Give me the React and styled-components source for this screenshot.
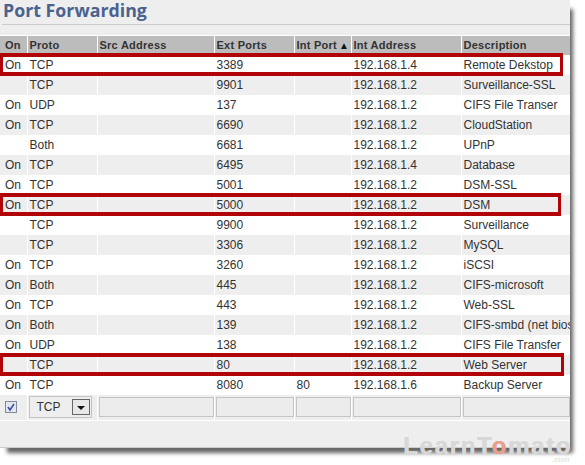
import React from "react";
import styled, { createGlobalStyle } from "styled-components";

const Global = createGlobalStyle`
  html, body {
    margin: 0;
    height: 465px;
    background: #fff;
    overflow: hidden;
  }
  body {
    font-family: "Liberation Sans", Arial, sans-serif;
    color: #333;
  }
`;

const Panel = styled.div`
  position: relative;
  width: 570px;
  height: 448px;
  box-sizing: border-box;
  background: #eee;
  border-bottom: 1px solid #ccc;
  box-shadow: 5px 7px 4px -2px #666;
`;

const Title = styled.h1`
  margin: 0 0 0 2px;
  height: 24px;
  padding-left: 1px;
  font-size: 17.8px;
  line-height: 20px;
  font-weight: bold;
  font-family: "Open Sans", sans-serif;
  color: #4b628f;
  border-bottom: 1px solid #ccc;
`;

const TableWrap = styled.div`
  position: relative;
  margin-top: 10px;
`;

const Table = styled.table`
  width: 570px;
  table-layout: fixed;
  border-collapse: collapse;
  font-size: 12px;
`;

const Head = styled.th`
  height: 19px;
  padding: 0 0 0 2px;
  box-sizing: border-box;
  background: #bcbcbc;
  border-left: 1px solid #fff;
  border-top: 1px solid #fff;
  text-align: left;
  font-weight: bold;
  font-size: 11px;
  letter-spacing: 0.25px;
  color: #333;
  white-space: nowrap;
  overflow: hidden;
  &:first-child {
    padding-left: 5px;
    border-left: 0;
  }
`;

const SortMark = styled.span`
  margin-left: 2px;
  font-size: 10px;
  letter-spacing: 0;
  color: #111;
`;

const Row = styled.tr`
  background: ${(p) => (p.$odd ? "#fff" : "#eee")};
`;

const Cell = styled.td`
  height: 20px;
  padding: 0 0 0 2px;
  box-sizing: border-box;
  border-left: 1px solid #fff;
  white-space: nowrap;
  overflow: hidden;
  color: #333;
  &:first-child {
    padding-left: 5px;
    border-left: 0;
  }
`;

const EditCell = styled.td`
  height: 26px;
  padding: 0 0 1px 1px;
  box-sizing: border-box;
  background: #eee;
  border-left: 1px solid #fff;
  border-bottom: 1px solid #fff;
  &:first-child {
    padding-left: 5px;
    border-left: 0;
  }
`;

const Check = styled.span`
  display: flex;
  width: 12px;
  height: 12px;
  box-sizing: border-box;
  border: 1px solid #7f8aa0;
  background: #e4e6ee;
  align-items: center;
  justify-content: center;
`;

const Select = styled.div`
  display: flex;
  align-items: center;
  justify-content: space-between;
  height: 22px;
  width: 63px;
  box-sizing: border-box;
  padding: 0 1px 0 7px;
  border: 1px solid #c4c4c4;
  font-size: 12px;
  color: #333;
`;

const SelectButton = styled.span`
  display: flex;
  align-items: center;
  justify-content: center;
  width: 18px;
  height: 16px;
  box-sizing: border-box;
  border: 1px solid #666;
  background: #e8e8e8;
`;

const Arrow = styled.span`
  width: 0;
  height: 0;
  margin-top: 2px;
  border-left: 4px solid transparent;
  border-right: 4px solid transparent;
  border-top: 4px solid #111;
`;

const Field = styled.div`
  height: 20px;
  box-sizing: border-box;
  border: 1px solid #c4c4c4;
  background: #ececec;
`;

const Mark = styled.div`
  position: absolute;
  left: 0;
  width: ${(p) => p.$w}px;
  top: ${(p) => p.$top}px;
  height: 23px;
  box-sizing: border-box;
  border: solid #b00408;
  border-width: 4px 3px;
`;

const Watermark = styled.div`
  position: absolute;
  left: 403px;
  top: 436px;
  font-size: 24px;
  line-height: 20px;
  font-weight: bold;
  letter-spacing: 1.7px;
  color: #d8d8d8;
  text-shadow: 0.6px 0 0 #d8d8d8;
  white-space: nowrap;
`;

const Tomato = styled.span`
  color: #e8a08e;
  text-shadow: 0.6px 0 0 #e8a08e;
`;

const Com = styled.div`
  position: absolute;
  left: 552px;
  top: 456px;
  font-size: 8px;
  line-height: 8px;
  font-style: italic;
  color: #d8d8d8;
`;

const columns = [
  ["On", 27],
  ["Proto", 70],
  ["Src Address", 117],
  ["Ext Ports", 80],
  ["Int Port", 57],
  ["Int Address", 110],
  ["Description", 109],
];

const rows = [
  ["On", "TCP", "3389", "", "192.168.1.4", "Remote Dekstop"],
  ["", "TCP", "9901", "", "192.168.1.2", "Surveillance-SSL"],
  ["On", "UDP", "137", "", "192.168.1.2", "CIFS File Transer"],
  ["On", "TCP", "6690", "", "192.168.1.2", "CloudStation"],
  ["", "Both", "6681", "", "192.168.1.2", "UPnP"],
  ["On", "TCP", "6495", "", "192.168.1.4", "Database"],
  ["On", "TCP", "5001", "", "192.168.1.2", "DSM-SSL"],
  ["On", "TCP", "5000", "", "192.168.1.2", "DSM"],
  ["", "TCP", "9900", "", "192.168.1.2", "Surveillance"],
  ["", "TCP", "3306", "", "192.168.1.2", "MySQL"],
  ["On", "TCP", "3260", "", "192.168.1.2", "iSCSI"],
  ["On", "Both", "445", "", "192.168.1.2", "CIFS-microsoft"],
  ["On", "TCP", "443", "", "192.168.1.2", "Web-SSL"],
  ["On", "Both", "139", "", "192.168.1.2", "CIFS-smbd (net bios)"],
  ["On", "UDP", "138", "", "192.168.1.2", "CIFS File Transfer"],
  ["", "TCP", "80", "", "192.168.1.2", "Web Server"],
  ["On", "TCP", "8080", "80", "192.168.1.6", "Backup Server"],
];

export default function App() {
  return (
    <>
      <Global />
      <Panel>
        <Title>Port Forwarding</Title>
        <TableWrap>
          <Table>
            <colgroup>
              {columns.map(([name, w]) => (
                <col key={name} width={w} />
              ))}
            </colgroup>
            <thead>
              <tr>
                {columns.map(([name]) => (
                  <Head key={name}>
                    {name}
                    {name === "Int Port" && <SortMark>▲</SortMark>}
                  </Head>
                ))}
              </tr>
            </thead>
            <tbody>
              {rows.map((r, i) => (
                <Row key={i} $odd={i % 2 === 0}>
                  <Cell>{r[0]}</Cell>
                  <Cell>{r[1]}</Cell>
                  <Cell />
                  <Cell>{r[2]}</Cell>
                  <Cell>{r[3]}</Cell>
                  <Cell>{r[4]}</Cell>
                  <Cell>{r[5]}</Cell>
                </Row>
              ))}
              <tr>
                <EditCell>
                  <Check>
                    <svg width="10" height="10" viewBox="0 0 10 10">
                      <path d="M2 5l2 3 4-6" fill="none" stroke="#3a4fb0" strokeWidth="1.6" />
                    </svg>
                  </Check>
                </EditCell>
                <EditCell>
                  <Select>
                    TCP
                    <SelectButton>
                      <Arrow />
                    </SelectButton>
                  </Select>
                </EditCell>
                <EditCell>
                  <Field />
                </EditCell>
                <EditCell>
                  <Field />
                </EditCell>
                <EditCell>
                  <Field />
                </EditCell>
                <EditCell>
                  <Field />
                </EditCell>
                <EditCell>
                  <Field />
                </EditCell>
              </tr>
            </tbody>
          </Table>
          <Mark $top={18} $w={563} />
          <Mark $top={158} $w={561} />
          <Mark $top={318} $w={564} />
        </TableWrap>
        <Watermark>
          LearnT<Tomato>o</Tomato>mato
        </Watermark>
        <Com>.com</Com>
      </Panel>
    </>
  );
}
